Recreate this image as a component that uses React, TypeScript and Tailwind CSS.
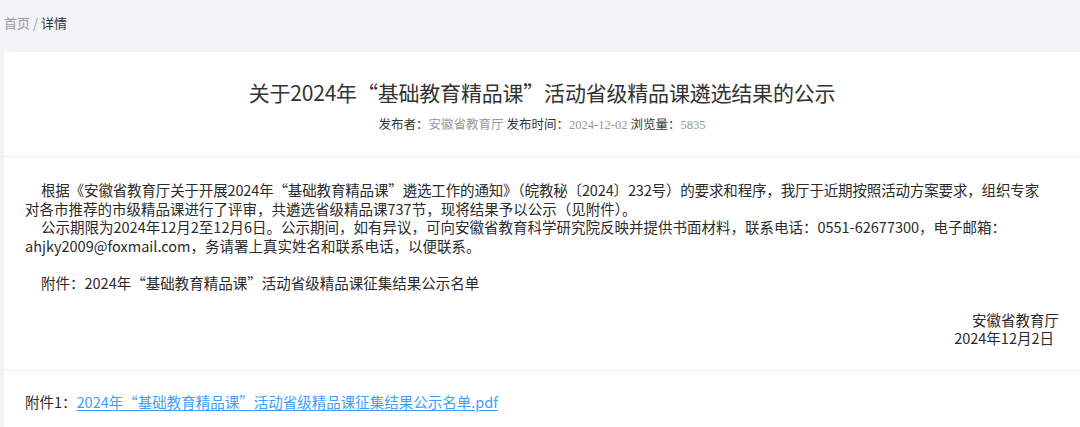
const body = '"Noto Sans CJK SC", "Noto Sans", sans-serif';

export default function App() {
  return (
    <div className="min-h-screen bg-[#f2f3f7] pl-[4px]" style={{ fontFamily: body }}>
      {/* breadcrumb */}
      <div className="pt-[14px] mb-[20px] text-[13px] leading-[18px]">
        <span className="text-[#9a9a9a]">首页 / </span>
        <span className="text-[#333]">详情</span>
      </div>

      <div className="bg-white">
        <div className="pt-[25px] pb-[22px] border-b border-[#f0f0f0] text-center">
          <h1 className="text-[21px] leading-[30px] text-[#333] font-normal tracking-[-0.2px]">
            关于2024年“基础教育精品课”活动省级精品课遴选结果的公示
          </h1>
          <div
            className="mt-[9px] text-[12.5px] leading-[18px]"
            style={{ fontFamily: '"Liberation Serif", "Noto Sans CJK SC", serif' }}
          >
            <span className="text-[#333]">发布者：</span>
            <span className="text-[#999]">安徽省教育厅</span>
            <span className="text-[#333]"> 发布时间：</span>
            <span className="text-[#999]">2024-12-02</span>
            <span className="text-[#333]"> 浏览量：</span>
            <span className="text-[#999]">5835</span>
          </div>
        </div>

        <div className="px-[21px] pt-[24px] pb-[22px] border-b border-[#f0f0f0] text-[14.5px] leading-[18.5px] text-[#2b2b2b] whitespace-nowrap">
          <div className="indent-[16px] tracking-[-0.15px]">
            根据《安徽省教育厅关于开展2024年“基础教育精品课”遴选工作的通知》（皖教秘〔2024〕232号）的要求和程序，我厅于近期按照活动方案要求，组织专家
          </div>
          <div>对各市推荐的市级精品课进行了评审，共遴选省级精品课737节，现将结果予以公示（见附件）。</div>
          <div className="indent-[16px]">
            公示期限为2024年12月2至12月6日。公示期间，如有异议，可向安徽省教育科学研究院反映并提供书面材料，联系电话：0551-62677300，电子邮箱：
          </div>
          <div>ahjky2009@foxmail.com，务请署上真实姓名和联系电话，以便联系。</div>
          <div className="h-[18.5px]" />
          <div className="indent-[16px]">附件：2024年“基础教育精品课”活动省级精品课征集结果公示名单</div>
          <div className="h-[18.5px]" />
          <div className="text-right">安徽省教育厅</div>
          <div className="text-right pr-[5px]">2024年12月2日</div>
        </div>

        <div className="px-[21px] pt-[22px] pb-[20px] text-[14.5px] leading-[18.5px] text-[#2b2b2b] whitespace-nowrap">
          附件1：
          <a href="#" className="text-[#409eff] underline underline-offset-2">
            2024年“基础教育精品课”活动省级精品课征集结果公示名单.pdf
          </a>
        </div>
      </div>
    </div>
  );
}
